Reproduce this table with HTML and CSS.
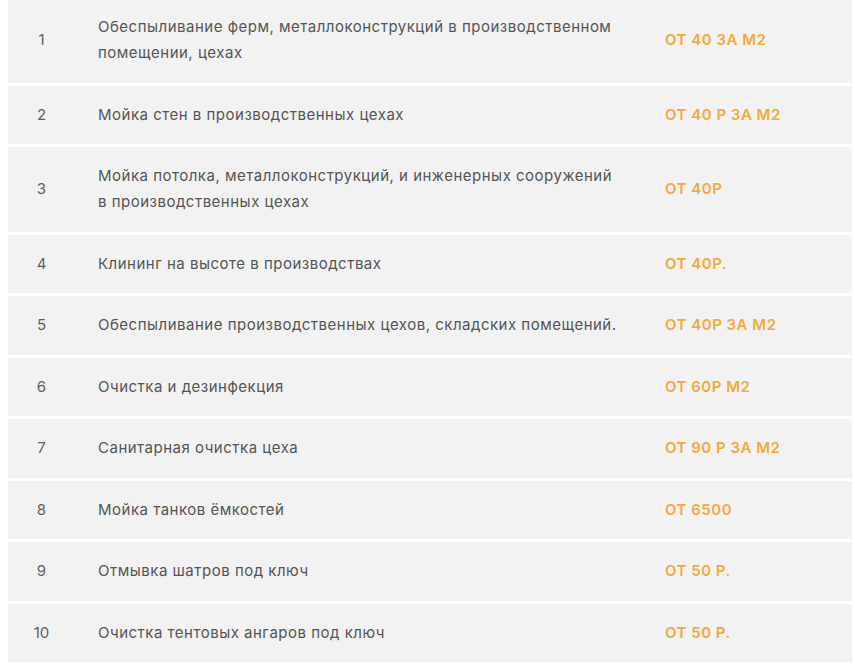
FILE: index.html
```html
<!DOCTYPE html>
<html lang="ru">
<head>
<meta charset="utf-8">
<link rel="stylesheet" href="styles.css">
</head>
<body>
<div class="price-table">
  <div class="row"><div class="num">1</div><div class="desc">Обеспыливание ферм, металлоконструкций в производственном помещении, цехах</div><div class="price">ОТ 40 ЗА М2</div></div>
  <div class="row"><div class="num">2</div><div class="desc">Мойка стен в производственных цехах</div><div class="price">ОТ 40 Р ЗА М2</div></div>
  <div class="row"><div class="num">3</div><div class="desc">Мойка потолка, металлоконструкций, и инженерных сооружений в производственных цехах</div><div class="price">ОТ 40Р</div></div>
  <div class="row"><div class="num">4</div><div class="desc">Клининг на высоте в производствах</div><div class="price">ОТ 40Р.</div></div>
  <div class="row"><div class="num">5</div><div class="desc">Обеспыливание производственных цехов, складских помещений.</div><div class="price">ОТ 40Р ЗА М2</div></div>
  <div class="row"><div class="num">6</div><div class="desc">Очистка и дезинфекция</div><div class="price">ОТ 60Р М2</div></div>
  <div class="row"><div class="num">7</div><div class="desc">Санитарная очистка цеха</div><div class="price">ОТ 90 Р ЗА М2</div></div>
  <div class="row"><div class="num">8</div><div class="desc">Мойка танков ёмкостей</div><div class="price">ОТ 6500</div></div>
  <div class="row"><div class="num">9</div><div class="desc">Отмывка шатров под ключ</div><div class="price">ОТ 50 Р.</div></div>
  <div class="row"><div class="num">10</div><div class="desc">Очистка тентовых ангаров под ключ</div><div class="price">ОТ 50 Р.</div></div>
</div>
</body>
</html>
```
FILE: styles.css
```css
html, body {
  margin: 0;
  padding: 0;
  background: #ffffff;
}
body {
  font-family: Inter, "Open Sans", sans-serif;
  font-size: 15px;
  color: #555555;
}
.price-table {
  display: flex;
  flex-direction: column;
  gap: 3px;
  margin: -2px 3px 0 8px;
}
.row {
  display: grid;
  grid-template-columns: 67px 567px 1fr;
  align-items: center;
  background: #f2f2f2;
  line-height: 26px;
}
.row > div {
  padding: 16.25px 0;
}
.num {
  text-align: center;
  color: #606060;
}
.desc {
  padding-left: 23px !important;
  padding-right: 23px !important;
  letter-spacing: 0.5px;
}
.price {
  padding-left: 23px !important;
  color: #f2aa40;
  font-weight: 600;
  letter-spacing: 0.5px;
}
```
